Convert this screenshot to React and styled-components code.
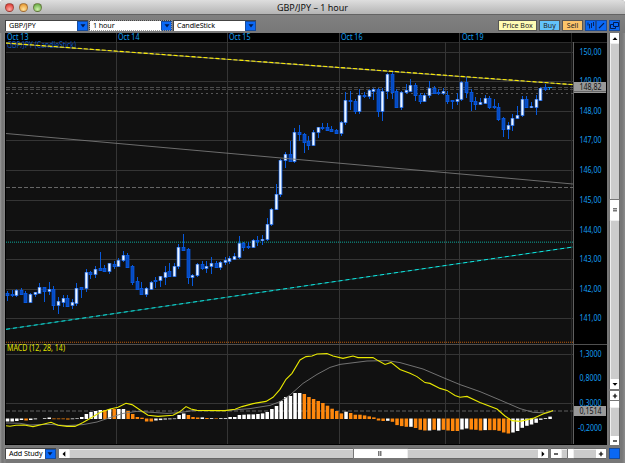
import styled, { createGlobalStyle } from "styled-components";

// THEME
const colors = {
  blue: "#0a68f5",
  label: "#159ff0",
  grid: "#353535",
  yellow: "#e8e800",
  cyan: "#12e5df",
  orange: "#ff880d",
};

// CANDLES: high, body top, body bottom, low, 1 = rising
const candles = [
  [291, 293, 295, 301, 0], [290, 294, 295, 297, 0], [289, 290, 295, 297, 1],
  [288, 290, 294, 295, 0], [291, 293, 302, 302, 0], [293, 294, 302, 302, 1],
  [292, 292, 294, 297, 1], [283, 287, 293, 293, 1], [287, 287, 291, 302, 0],
  [282, 289, 291, 295, 1], [286, 289, 305, 310, 0], [297, 301, 305, 314, 1],
  [295, 298, 302, 307, 1], [295, 298, 306, 306, 0], [299, 302, 305, 309, 1],
  [283, 288, 303, 306, 1], [287, 287, 289, 298, 0], [269, 272, 288, 292, 1],
  [271, 272, 274, 279, 0], [266, 269, 274, 278, 1], [252, 268, 270, 270, 0],
  [265, 268, 271, 272, 0], [263, 263, 271, 274, 1], [261, 264, 266, 269, 0],
  [258, 260, 266, 267, 1], [251, 255, 260, 262, 1], [253, 255, 267, 268, 0],
  [265, 266, 282, 285, 0], [277, 281, 289, 289, 0], [282, 288, 294, 295, 0],
  [287, 288, 294, 297, 1], [281, 282, 289, 290, 1], [277, 280, 281, 288, 0],
  [276, 276, 280, 287, 1], [266, 272, 277, 285, 1], [263, 271, 276, 277, 0],
  [263, 266, 276, 277, 1], [244, 247, 266, 269, 1], [234, 247, 250, 250, 0],
  [248, 249, 277, 284, 0], [274, 275, 277, 286, 1], [263, 264, 275, 277, 1],
  [261, 264, 268, 270, 0], [261, 266, 268, 273, 1], [257, 263, 266, 274, 1],
  [261, 263, 267, 267, 0], [261, 262, 267, 270, 1], [257, 260, 262, 265, 1],
  [256, 258, 261, 264, 1], [253, 256, 259, 259, 1], [236, 243, 257, 259, 1],
  [242, 243, 247, 251, 0], [242, 246, 247, 249, 0], [239, 240, 247, 248, 1],
  [236, 240, 241, 246, 0], [235, 239, 240, 245, 1], [218, 224, 239, 241, 1],
  [208, 209, 224, 226, 1], [184, 194, 209, 210, 1], [159, 160, 194, 197, 1],
  [152, 154, 160, 168, 1], [141, 154, 161, 162, 0], [128, 132, 161, 163, 1],
  [125, 132, 134, 141, 0], [133, 134, 142, 153, 0], [136, 141, 145, 150, 0],
  [130, 132, 145, 146, 1], [127, 127, 132, 138, 1], [123, 127, 128, 130, 0],
  [123, 127, 130, 131, 0], [126, 129, 131, 132, 0], [129, 130, 133, 134, 0],
  [121, 122, 133, 136, 1], [92, 100, 122, 125, 1], [91, 100, 101, 110, 0],
  [99, 101, 111, 114, 0], [89, 95, 111, 114, 1], [92, 95, 96, 98, 0],
  [89, 90, 96, 99, 1], [88, 89, 91, 100, 1], [88, 89, 111, 117, 0],
  [88, 91, 111, 121, 1], [73, 74, 91, 99, 1], [72, 74, 92, 99, 0],
  [89, 91, 107, 107, 0], [91, 92, 107, 110, 1], [84, 90, 92, 94, 1],
  [79, 85, 91, 92, 1], [83, 85, 95, 101, 0], [93, 95, 101, 104, 0],
  [93, 95, 101, 102, 1], [81, 88, 95, 98, 1], [86, 88, 93, 94, 0],
  [89, 92, 93, 95, 0], [88, 91, 93, 95, 1], [91, 95, 101, 104, 0],
  [100, 100, 101, 109, 0], [93, 99, 101, 105, 1], [81, 82, 99, 101, 1],
  [77, 82, 92, 98, 0], [89, 92, 101, 111, 0], [97, 101, 104, 110, 0],
  [98, 102, 104, 104, 1], [95, 98, 103, 103, 1], [96, 98, 107, 109, 0],
  [99, 106, 107, 109, 0], [103, 107, 119, 121, 0], [117, 118, 129, 137, 0],
  [122, 125, 129, 139, 1], [114, 118, 125, 131, 1], [106, 115, 118, 119, 1],
  [96, 99, 115, 117, 1], [96, 99, 107, 108, 0], [102, 106, 107, 108, 1],
  [95, 99, 107, 115, 1], [87, 88, 100, 101, 1], [84, 87, 89, 91, 0],
];

// HISTOGRAM: pixels over the zero line
const histogram = [
  -3, -3, -2.5, -1.5, -2, -1.5, -0.8, 0, 0.7, 1.5, -0.7, -0.7, -0.7, -1, -0.7,
  0.6, 2, 5, 7, 8, 9, 9, 10, 10, 10, 10, 8, 5, 2, 1.3, -3, -3, -2, -1.6, -1,
  -0.8, -0.6, 4, 5.5, 4, 2, 1.5, 1.6, 1, 0.8, 0.6, 0.8, 0.8, 2, 2, 4, 4.3, 4.6,
  4.6, 5, 5.6, 7, 10, 13, 18, 22, 23, 26, 26, 25, 22, 20, 18, 16, 13.3, 10.3,
  8, 5.6, 7.3, 6, 4.3, 4.3, 3.6, 2.6, 1.6, -2, -2.5, -2.3, -3.3, -6.6, -7.6,
  -8.3, -8.3, -9.5, -11.3, -12, -12, -11.3, -12, -11.3, -12, -12.5, -12.5, -11,
  -10, -11, -11.3, -12, -11.6, -11.6, -11.6, -12.3, -14, -15, -14, -12.5, -9.3,
  -7.3, -6, -4.3, -1.3, 0.8, 2.4,
];
const orangeRuns = [
  [4, 4], [10, 13], [21, 21], [23, 23], [26, 31], [39, 41], [43, 43], [45, 45],
  [64, 72], [74, 81], [83, 86], [88, 90], [92, 92], [94, 97], [100, 102],
  [104, 108],
];
const isOrange = (i) => orangeRuns.some(([from, to]) => i >= from && i <= to);

const macdLine =
  "6,425.7 10,426.3 16,425.3 24,425 33,426.6 43,424.3 51,422.3 58,425.3 67,426.4 75,426.4 83,422.6 90,418.6 100,412.6 110,409 118,407.3 126,403.3 132,404.6 142,411.3 148,415.3 158,416.4 173,415.3 180,411.6 186,406.6 191,409 197,410.4 225,410.6 235,409.3 242,406.6 253,403.6 266,401.4 273,397.3 280,389.3 286,379.3 292,373.3 300,360 306,356.6 312,356 317,354 327,353.6 333,356 343,358.4 353,356 358,357.6 373,357.6 378,360.6 385,364.4 391,362.4 400,369.4 410,373.3 417,376.6 425,382.6 430,383.4 440,388.4 447,390.4 455,395.4 460,397.3 467,396.4 480,402.4 497,409 505,416 512,420.6 520,421.4 533,418.4 543,414 553,410.4";
const signalLine =
  "6,423 20,423.3 30,425 40,424.6 50,424.4 67,425.6 83,424.6 97,422 110,417.6 123,413.4 137,411.4 147,412 167,413.4 180,412.6 193,410.6 225,410.6 250,408.6 270,405.4 280,401.6 290,395 303,383.4 317,374.4 330,367.4 340,364.4 367,361 387,360.6 400,362.6 423,369 445,378.4 460,384.6 480,391.6 500,400 520,408.6 533,412.3 547,413 553,411";

const priceLabels = [
  ["150,00", 52], ["149,00", 81], ["148,00", 111], ["147,00", 140],
  ["146,00", 170], ["145,00", 200], ["144,00", 230], ["143,00", 259],
  ["142,00", 289], ["141,00", 318],
];
const macdLabels = [
  ["1,3000", 354], ["0,8000", 378], ["0,3000", 403], ["-0,2000", 428],
];
const days = [
  ["Oct 13", 7], ["Oct 14", 118], ["Oct 15", 229], ["Oct 16", 341], ["Oct 19", 462],
];

const candleX = (i) => Math.round(6.9 + i * 4.637);

function Candle({ index, data }) {
  const [high, top, bottom, low, up] = data;
  const x = candleX(index);
  const height = Math.max(bottom - top, 1);

  return (
    <g>
      <rect x={x} y={high} width="1" height={Math.max(low - high, 1)} fill="#0759dc" />
      <rect x={x - 1} y={top} width="3" height={height + 1} fill={colors.blue} />
      <rect x={x - 1.6} y={top} width="4.2" height={height + 1} fill="#0751d2" opacity="0.65" />
      {up ? (
        <rect x={x - 0.7} y={top + 0.5} width="2.2" height={Math.max(height - 0.2, 1)} fill="#edf6ff" />
      ) : (
        <rect x={x - 0.7} y={top + 0.8} width="2.2" height={Math.max(height - 0.8, 0.5)} fill="#064bc0" />
      )}
    </g>
  );
}

function AxisLabel({ text, y, color }) {
  return (
    <text
      x={text.length > 6 ? 578 : 579.5}
      y={y + 3}
      textLength={text.length > 6 ? 24 : 22}
      lengthAdjust="spacingAndGlyphs"
      fill={color || colors.label}
    >
      {text}
    </text>
  );
}

function Chart() {
  return (
    <ChartSvg viewBox="5 33 602 412">
      <rect x="5" y="33" width="602" height="412" fill="#000" />
      <rect x="6" y="42" width="568" height="402" fill="#111" />

      {/* GRID */}
      <g fill={colors.grid}>
        {priceLabels.map(([text, y]) => (
          <rect key={text} x="6" y={y} width="568" height="1" />
        ))}
        <rect x="6" y="354" width="568" height="1" />
        <rect x="6" y="403" width="568" height="1" />
        <rect x="6" y="42" width="601" height="1" fill="#2c2c2c" />
        {[116, 227, 339, 459].map((x) => (
          <rect key={x} x={x} y="33" width="1" height="411" />
        ))}
        <rect x="445" y="42" width="1" height="402" />
        <rect x="571" y="33" width="1" height="411" fill="#262626" />
      </g>

      {/* LEVELS */}
      <g fill="none" strokeWidth="1" shapeRendering="crispEdges">
        <path d="M6 87.5H573" stroke="#4c4c4c" strokeDasharray="4 2" />
        <path d="M6 89.5H573" stroke="#454545" strokeDasharray="4 2" />
        <path d="M6 93.5H573" stroke="#555" strokeDasharray="2 3" />
        <path d="M6 187.5H573" stroke="#666" strokeDasharray="4 2" />
        <path d="M6 242.5H573" stroke="#107068" strokeDasharray="1 1" />
        <path d="M6 241.5H573" stroke="#0b4844" strokeDasharray="1 1" />
        <path d="M6 342.5H573" stroke="#8f480e" strokeDasharray="1 1" />
        <path d="M6 341.5H573" stroke="#40230c" strokeDasharray="1 1" />
      </g>

      <Label>
        <text x="7" y="48" textLength="69" lengthAdjust="spacingAndGlyphs" fill="#0b50b8">
          GBP/JPY (CandleStick)
        </text>
      </Label>

      {candles.map((data, index) => (
        <Candle key={index} index={index} data={data} />
      ))}
      <path d="M548 87.5h4M549.5 87v3" stroke="#0e92f0" fill="none" />

      {/* TREND LINES */}
      <path d="M6 133.5L573 184" stroke="#777" strokeWidth="0.9" />
      <path d="M6 329.3L573 247" stroke="#087a78" strokeWidth="0.7" />
      <path d="M6 329.3L573 247" stroke={colors.cyan} strokeWidth="1" strokeDasharray="4 3" />
      <path d="M6 43.2L573 84.8" stroke="#77776a" strokeWidth="1.1" />
      <path d="M6 43L573 84.6" stroke="#fff000" strokeWidth="1.1" strokeDasharray="4 2" />

      {/* MACD */}
      <rect x="5" y="344" width="602" height="1" fill="#505050" />
      <Label>
        <text x="7" y="351" textLength="58" lengthAdjust="spacingAndGlyphs" fill="#e2e200">
          MACD (12, 28, 14)
        </text>
      </Label>
      <path d="M6 411H573" stroke="#464646" strokeWidth="1.5" strokeDasharray="4 2" />
      {histogram.map((value, index) => (
        <rect
          key={index}
          x={5.8 + index * 4.637}
          y={value > 0 ? 419 - value : 418.5}
          width="3.5"
          height={Math.abs(value)}
          fill={isOrange(index) ? colors.orange : "#fff"}
        />
      ))}
      <polyline points={signalLine} fill="none" stroke="#7d7d7d" strokeWidth="0.9" />
      <polyline points={macdLine} fill="none" stroke={colors.yellow} strokeWidth="1.1" />

      {/* AXIS */}
      <rect x="573" y="42" width="1" height="402" fill="#606060" />
      <Label>
        {days.map(([text, x]) => (
          <text
            key={text}
            x={x}
            y="40"
            textLength="21.5"
            lengthAdjust="spacingAndGlyphs"
            fill={colors.label}
          >
            {text}
          </text>
        ))}
        {priceLabels.concat(macdLabels).map(([text, y]) => (
          <AxisLabel key={text} text={text} y={y} />
        ))}
        <rect x="574" y="82" width="32" height="11" fill="#999" />
        <rect x="574" y="91" width="32" height="1" fill="#666" />
        <AxisLabel text="148,82" y={87} color="#111" />
        <rect x="574" y="406" width="32" height="10" fill="#999" />
        <AxisLabel text="0,1514" y={411} color="#111" />
      </Label>
    </ChartSvg>
  );
}

function Select({ text, width, focused }) {
  return (
    <SelectBox $width={width} $focused={focused}>
      <SelectText>{text}</SelectText>
      <SelectArrow>
        <svg width="6" height="4" viewBox="0 0 6 4">
          <path d="M0.5 0.3h5L3 3.6z" fill="#001a4d" />
        </svg>
      </SelectArrow>
    </SelectBox>
  );
}

const glyphs = {
  up: "M1.5 6L4 3.2L6.5 6z",
  down: "M1.5 3L4 5.8L6.5 3z",
  left: "M5.3 1.3L2.5 4L5.3 6.7z",
  right: "M2.7 1.3L5.5 4L2.7 6.7z",
  plus: "M1.8 3.4h1.6V1.8h1.2v1.6h1.6v1.2H4.6v1.6H3.4V4.6H1.8z",
  minus: "M2 3.4h4v1.2H2z",
};

function Step({ glyph, size }) {
  return (
    <StepButton $size={size}>
      <svg width="8" height="8" viewBox="0 0 8 8">
        <path d={glyphs[glyph]} />
      </svg>
    </StepButton>
  );
}

export default function App() {
  return (
    <Window>
      <GlobalStyle />
      <TitleBar>
        <Lights>
          <Light $color="#e3463e" $glow="#ffaaa2" />
          <Light $color="#e9a03c" $glow="#ffe29a" />
          <Light $color="#72b34d" $glow="#cdf0a9" />
        </Lights>
        <Title>GBP/JPY – 1 hour</Title>
      </TitleBar>

      <Toolbar>
        <Select text="GBP/JPY" width={83} />
        <Select text="1 hour" width={83} focused />
        <Select text="CandleStick" width={83} />
        <Actions>
          <Action $color="#fffbb4" $width={39}>Price Box</Action>
          <Action $color="#63c3fb" $width={21}>Buy</Action>
          <Action $color="#fbc46a" $width={21}>Sell</Action>
          <Tools>
            <Tool>
              <svg width="9" height="9" viewBox="0 0 9 9">
                <path d="M2 1.5v3M3.5 3v4.5M5.5 2v5M7.5 1v4" stroke="#03245f" />
              </svg>
            </Tool>
            <Tool>
              <svg width="9" height="9" viewBox="0 0 9 9">
                <path d="M2 7.2L7 2.2" stroke="#011b50" strokeWidth="1.2" />
              </svg>
            </Tool>
          </Tools>
          <Tool>
            <svg width="9" height="9" viewBox="0 0 9 9">
              <path d="M3.5 1.5h5v4h-5zM3.5 3.5h-3v4h5v-2" fill="none" stroke="#011b50" />
            </svg>
          </Tool>
        </Actions>
      </Toolbar>

      <Main>
        <Chart />
        <Side>
          <Bar $vertical $length={356}>
            <Step glyph="up" size={10} />
            <Track $size={157} />
            <Thumb $size={20}>
              <Grip />
            </Thumb>
            <Track />
            <Step glyph="down" size={10} />
          </Bar>
          <Bar $vertical $length={54}>
            <Step glyph="plus" size={10} />
            <Thumb $size={6} />
            <Track />
            <Step glyph="minus" size={9} />
          </Bar>
        </Side>
      </Main>

      <Footer>
        <Select text="Add Study" width={51} />
        <Bar $length={490}>
          <Step glyph="left" size={10} />
          <Track $size={285} />
          <Thumb $size={53}>
            <Grip $vertical />
          </Thumb>
          <Track />
          <Step glyph="right" size={10} />
        </Bar>
        <Bar $length={55}>
          <Step glyph="minus" size={10} />
          <Track $size={7} />
          <Thumb $size={5} />
          <Track />
          <Step glyph="plus" size={10} />
        </Bar>
        <Corner />
      </Footer>
    </Window>
  );
}

const GlobalStyle = createGlobalStyle`
  * {
    box-sizing: border-box;
  }

  body {
    margin: 0;
    background: #fff;
    overflow: hidden;
    font-family: "Noto Sans", "Open Sans", sans-serif;
  }
`;

const Window = styled.div`
  width: 625px;
  height: 463px;
  display: flex;
  flex-direction: column;
  background: linear-gradient(90deg, #999 0, #777 2px, #777 3px, #858585 5px, #777 6px, #777 622px, #8c8c8c 625px);
  border-radius: 4px 4px 0 0;
  overflow: hidden;
`;

const TitleBar = styled.div`
  height: 15px;
  flex-shrink: 0;
  display: grid;
  grid-template-columns: 1fr auto 1fr;
  align-items: center;
  background: linear-gradient(#dedede, #b4b4b4);
  border-bottom: 1px solid #636363;
`;

const Lights = styled.div`
  display: flex;
  gap: 5px;
  padding-left: 5px;
`;

const Light = styled.span`
  width: 9px;
  height: 9px;
  border-radius: 50%;
  border: 1px solid rgba(70, 40, 30, 0.45);
  background: radial-gradient(circle at 50% 75%, ${(p) => p.$glow}, ${(p) => p.$color} 75%);
`;

const Title = styled.div`
  font-size: 9px;
  line-height: 13px;
  width: 72px;
  text-align: center;
  white-space: nowrap;
  color: #111;
`;

const Toolbar = styled.div`
  height: 18px;
  flex-shrink: 0;
  display: flex;
  align-items: center;
  gap: 1px;
  padding: 3px 5px 0;
  background: linear-gradient(#808080, #777);
`;

const SelectBox = styled.div`
  width: ${(p) => p.$width}px;
  height: 11px;
  display: flex;
  background: #fff;
  border-top: 1px solid #444;
  border-left: 1px solid #444;
  outline: ${(p) => (p.$focused ? "1px dotted #999" : "none")};
  outline-offset: -1px;
`;

const SelectText = styled.span`
  flex: 1;
  padding-left: 3px;
  font-size: 7.2px;
  line-height: 9px;
  letter-spacing: -0.1px;
  white-space: nowrap;
  color: #000;
`;

const SelectArrow = styled.span`
  width: 11px;
  display: flex;
  align-items: center;
  justify-content: center;
  background: ${colors.blue};
  border: 1px solid #164b9c;
`;

const Actions = styled.div`
  display: flex;
  gap: 2px;
  margin-left: auto;
`;

const Action = styled.div`
  width: ${(p) => p.$width}px;
  height: 11px;
  background: ${(p) => p.$color};
  border: 1px solid #555;
  font-size: 7px;
  line-height: 9px;
  text-align: center;
  white-space: nowrap;
  color: #222;
`;

const Tools = styled.div`
  display: flex;
`;

const Tool = styled.div`
  width: 11px;
  height: 11px;
  display: flex;
  align-items: center;
  justify-content: center;
  background: ${colors.blue};
  border: 1px solid #174a9b;

  svg {
    flex-shrink: 0;
  }
`;

const Main = styled.div`
  height: 412px;
  flex-shrink: 0;
  display: flex;
  gap: 2px;
  padding-left: 5px;
`;

const ChartSvg = styled.svg`
  width: 602px;
  height: 412px;
  display: block;
`;

const Label = styled.g`
  font-family: "Noto Sans", "Open Sans", sans-serif;
  font-size: 8px;
`;

const Side = styled.div`
  display: flex;
  flex-direction: column;
  gap: 2px;
`;

const Bar = styled.div`
  display: flex;
  flex-direction: ${(p) => (p.$vertical ? "column" : "row")};
  width: ${(p) => (p.$vertical ? 11 : p.$length)}px;
  height: ${(p) => (p.$vertical ? p.$length : 11)}px;
  background: #666;
  border: 1px solid #666;
  border-width: ${(p) => (p.$vertical ? "0 1px" : "1px 0")};
`;

const StepButton = styled.div`
  flex: 0 0 ${(p) => p.$size}px;
  display: flex;
  align-items: center;
  justify-content: center;
  background: #fff;
`;

const Track = styled.div`
  flex: ${(p) => (p.$size ? `0 0 ${p.$size}px` : "1")};
  background: #ccc;
  border: 0 solid #eee;
  border-width: 1px 0 0 1px;
`;

const Thumb = styled.div`
  flex: 0 0 ${(p) => p.$size}px;
  display: flex;
  align-items: center;
  justify-content: center;
  background: #fff;
  box-shadow: 0 0 0 1px #777;
`;

const Grip = styled.div`
  width: 4px;
  height: ${(p) => (p.$vertical ? 5 : 4)}px;
  background: repeating-linear-gradient(
    ${(p) => (p.$vertical ? "90deg" : "180deg")},
    #777 0 1px,
    #bbb 1px 2px
  );
`;

const Footer = styled.div`
  flex: 1;
  display: flex;
  align-items: flex-start;
  gap: 3px;
  padding: 3px 5px 0;
`;

const Corner = styled.div`
  width: 11px;
  height: 11px;
  background: ${colors.blue};
  border: 1px solid #164b9c;
`;
